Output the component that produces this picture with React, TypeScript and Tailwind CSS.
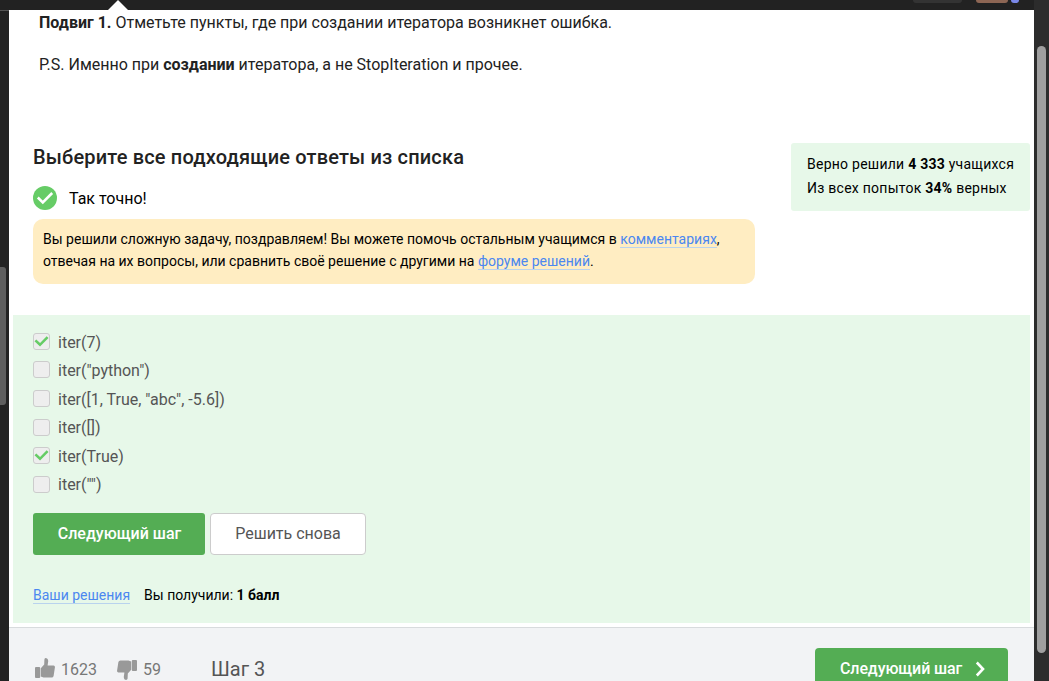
import type { ReactNode } from "react";

const options = [
  { text: "iter(7)", checked: true },
  { text: 'iter("python")', checked: false },
  { text: 'iter([1, True, "abc", -5.6])', checked: false },
  { text: "iter([])", checked: false },
  { text: "iter(True)", checked: true },
  { text: 'iter("")', checked: false },
];

function Link({ children }: { children: ReactNode }) {
  return (
    <a href="#" className="border-b border-[#b9d3ee] text-[#4b87f0]">
      {children}
    </a>
  );
}

function Thumb({ down = false }: { down?: boolean }) {
  return (
    <svg
      width="20"
      height="20"
      viewBox="0 0 20 20"
      fill="#999"
      className={down ? "rotate-180" : ""}
    >
      <rect x="0" y="9" width="5.2" height="11" rx="1" />
      <path d="M5.8 10.2 L9.2 6.4 L9.4 1.4 Q9.6 0 11 0 Q13.4 .4 13.2 3.2 L12.6 7.6 H18.6 Q20.2 7.8 19.9 9.6 L18.6 18 Q18.2 19.6 16.6 19.6 H8.5 L5.8 18.5 Z" />
    </svg>
  );
}

function Header() {
  return (
    <header className="relative h-[10px] shrink-0 bg-[#222]">
      <svg className="absolute left-[108px] top-0" width="20" height="10" viewBox="0 0 20 10">
        <path d="M0 10 L10 0 L20 10 Z" fill="#fff" />
      </svg>
      <div className="absolute left-[913px] top-0 h-[3px] w-[49px] rounded-b-[3px] bg-[#333]" />
      <div className="absolute left-[976px] top-0 h-[3px] w-[32px] rounded-b-[8px] bg-[#8d6654]" />
      <div className="absolute left-[1011px] top-0 h-[3px] w-[8px] rounded-b-[4px] bg-[#7a88e8]" />
    </header>
  );
}

function Quiz() {
  return (
    <section className="ml-1 mr-1 h-[308px] bg-[#e7f8e9] pl-5 pt-[13px] text-[#555]">
      <ul className="h-[185px]">
        {options.map((o) => (
          <li key={o.text} className="flex h-[28.6px] items-center text-[16px] leading-[28.6px]">
            <span className="mb-[2px] mr-2 flex size-[17px] items-center justify-center rounded-[3px] border border-[#ccc] bg-[#eee]">
              {o.checked && (
                <svg width="15" height="15" viewBox="0 0 15 15" className="shrink-0">
                  <path d="M1.4 6.4 L6 10.8 L13.6 3.2" fill="none" stroke="#66cc66" strokeWidth="2.6" />
                </svg>
              )}
            </span>
            <span className="pt-[1px]">{o.text}</span>
          </li>
        ))}
      </ul>
      <div className="flex gap-[5px]">
        <button className="h-[42px] w-[172px] rounded-[3px] bg-[#54ad54] pl-px text-[16px] font-medium text-white">
          Следующий шаг
        </button>
        <button className="h-[42px] w-[156px] rounded-[4px] border border-[#ccc] bg-white text-[16px] text-[#555]">
          Решить снова
        </button>
      </div>
      <div className="mt-[30px] flex gap-[14px] text-[14px] leading-5 text-black">
        <span>
          <Link>Ваши решения</Link>
        </span>
        <span>
          Вы получили: <b>1 балл</b>
        </span>
      </div>
    </section>
  );
}

function Footer() {
  return (
    <footer className="mt-1 flex h-[54px] shrink-0 items-start overflow-hidden border-t border-[#d8dbdd] bg-[#f2f3f5] text-[#777]">
      <div className="ml-[26px] mt-[30px] flex h-5 w-[82px] items-center gap-[6px]">
        <Thumb />
        <span className="pt-1 text-[16px]">1623</span>
      </div>
      <div className="mt-[30px] flex h-5 w-[94px] items-center gap-[6px]">
        <span className="mt-[3px]">
          <Thumb down />
        </span>
        <span className="pt-1 text-[16px]">59</span>
      </div>
      <div className="mt-[29px] text-[20px] leading-6 text-[#555]">Шаг 3</div>
      <button className="ml-auto mr-[26px] mt-5 flex h-[42px] w-[193px] items-center rounded-[4px] bg-[#54ad54] pl-[25px] text-[16px] font-medium tracking-[-0.1px] text-white">
        Следующий шаг
        <svg className="ml-[13px]" width="11" height="16" viewBox="0 0 11 16">
          <path d="M1.8 1.5 L8 8 L1.8 14.5" fill="none" stroke="#fff" strokeWidth="2.6" />
        </svg>
      </button>
    </footer>
  );
}

export default function App() {
  return (
    <div className="flex h-[681px] w-[1049px] flex-col overflow-hidden bg-[#222] font-['Roboto',sans-serif]">
      <div className="flex h-full">
        <div className="flex min-w-0 flex-1 flex-col">
          <Header />
          <div className="flex min-h-0 flex-1">
            <aside className="w-[9px] shrink-0 border-t border-[#555] pt-[256px]">
              <div className="h-[138px] w-[6px] rounded-r-[3px] bg-[#5e5e5e]" />
            </aside>
            <main className="flex flex-1 flex-col bg-white">
              <div className="h-[133px] pl-[30px] pt-px text-[16px] leading-6 text-[#222]">
                <p>
                  <b>Подвиг 1.</b> Отметьте пункты, где при создании итератора возникнет ошибка.
                </p>
                <p className="mt-[18px]">
                  P.S. Именно при <b>создании</b> итератора, а не StopIteration и прочее.
                </p>
              </div>
              <div className="flex h-[172px] justify-between pl-6 pr-1">
                <div className="w-[722px]">
                  <h2 className="text-[20px] font-medium leading-7 tracking-[0.16px] text-[#222]">
                    Выберите все подходящие ответы из списка
                  </h2>
                  <div className="mt-[15px] flex h-6 items-center gap-3 text-[16px] text-black">
                    <svg width="24" height="24" viewBox="0 0 24 24">
                      <circle cx="12" cy="12" r="12" fill="#66cc66" />
                      <path d="M4.8 11.5 L9.8 16.5 L19.2 7" fill="none" stroke="#fff" strokeWidth="2.5" />
                    </svg>
                    <span className="pt-[2px]">Так точно!</span>
                  </div>
                  <div className="mt-[9px] h-[65px] rounded-[10px] bg-[#ffedc2] px-[10px] pt-[9px] text-[14px] leading-[22px] text-black">
                    <p className="tracking-[0.008px]">
                      Вы решили сложную задачу, поздравляем! Вы можете помочь остальным учащимся в{" "}
                      <Link>комментариях</Link>,
                    </p>
                    <p>
                      отвечая на их вопросы, или сравнить своё решение с другими на{" "}
                      <Link>форуме решений</Link>.
                    </p>
                  </div>
                </div>
                <div className="h-[68px] w-[239px] whitespace-nowrap rounded-[3px] bg-[#e7f8e9] px-4 pt-[9px] text-[14px] leading-6 tracking-[0.25px] text-black">
                  <p>
                    Верно решили <b>4 333</b> учащихся
                  </p>
                  <p>
                    Из всех попыток <b>34%</b> верных
                  </p>
                </div>
              </div>
              <Quiz />
              <Footer />
            </main>
          </div>
        </div>
        <div className="w-[15px] shrink-0 bg-[#2c2c2c] pl-[3px] pt-[46px]">
          <div className="h-[607px] w-[9px] rounded-full bg-[#9f9f9f]" />
        </div>
      </div>
    </div>
  );
}
